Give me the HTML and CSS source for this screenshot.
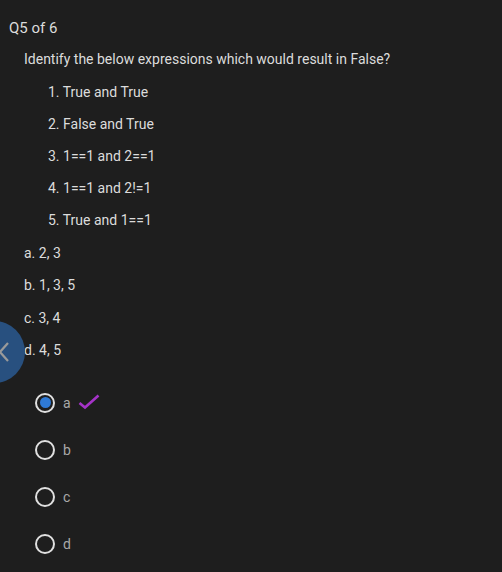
FILE: index.html
```html
<!DOCTYPE html>
<html>
<head>
<meta charset="utf-8">
<link rel="stylesheet" href="styles.css">
</head>
<body>
<div class="page">
  <div class="qnum">Q5 of 6</div>
  <div class="question">Identify the below expressions which would result in False?</div>
  <ol class="exprs">
    <li>1. True and True</li>
    <li>2. False and True</li>
    <li>3. 1==1 and 2==1</li>
    <li>4. 1==1 and 2!=1</li>
    <li>5. True and 1==1</li>
  </ol>
  <div class="choices">
    <div>a. 2, 3</div>
    <div>b. 1, 3, 5</div>
    <div>c. 3, 4</div>
    <div>d. 4, 5</div>
  </div>
  <div class="radios">
    <label class="radio"><span class="ring checked"></span><span class="lbl">a</span>
      <svg class="tick" width="22" height="16" viewBox="0 0 22 16"><path d="M1.5 9 L7 13.5 L20.5 1.5" fill="none" stroke="#a533c8" stroke-width="2.6"/></svg>
    </label>
    <label class="radio"><span class="ring"></span><span class="lbl">b</span></label>
    <label class="radio"><span class="ring"></span><span class="lbl">c</span></label>
    <label class="radio"><span class="ring"></span><span class="lbl">d</span></label>
  </div>
</div>
<div class="back">
  <svg width="12" height="22" viewBox="0 0 12 22"><path d="M10 2 L2 11 L10 20" fill="none" stroke="#9a9a9a" stroke-width="2.2"/></svg>
</div>
</body>
</html>
```
FILE: styles.css
```css
html, body {
  margin: 0;
  padding: 0;
  background: #1e1e1e;
  height: 100%;
  overflow: hidden;
}
body {
  font-family: Roboto, "Liberation Sans", sans-serif;
  color: #dcdcdc;
  font-size: 14px;
}
.page {
  padding: 18px 0 0 9px;
}
.qnum {
  font-size: 15px;
  line-height: 20px;
}
.question {
  margin: 11px 0 0 15px;
  line-height: 20px;
}
.exprs {
  list-style: none;
  margin: 13px 0 0 39px;
  padding: 0;
  display: flex;
  flex-direction: column;
  gap: 12px;
}
.exprs li {
  line-height: 20px;
}
.choices {
  margin: 13px 0 0 15px;
  display: flex;
  flex-direction: column;
  gap: 12.3px;
}
.choices div {
  line-height: 20px;
}
.radios {
  margin: 33px 0 0 26px;
  display: flex;
  flex-direction: column;
  gap: 27px;
}
.radio {
  display: flex;
  align-items: center;
  height: 20px;
}
.ring {
  width: 16px;
  height: 16px;
  border: 2px solid #e0e0e0;
  border-radius: 50%;
  display: flex;
  align-items: center;
  justify-content: center;
  flex: none;
}
.ring.checked::after {
  content: "";
  width: 11px;
  height: 11px;
  border-radius: 50%;
  background: #2f7ad6;
}
.lbl {
  margin-left: 8px;
  color: #a9a9a9;
  font-size: 14px;
}
.tick {
  margin-left: 7px;
  margin-top: -2px;
}
.back {
  position: absolute;
  left: -37px;
  top: 321px;
  width: 62px;
  height: 62px;
  border-radius: 50%;
  background: #28507f;
}
.back svg {
  position: absolute;
  left: 35px;
  top: 20px;
}
```
